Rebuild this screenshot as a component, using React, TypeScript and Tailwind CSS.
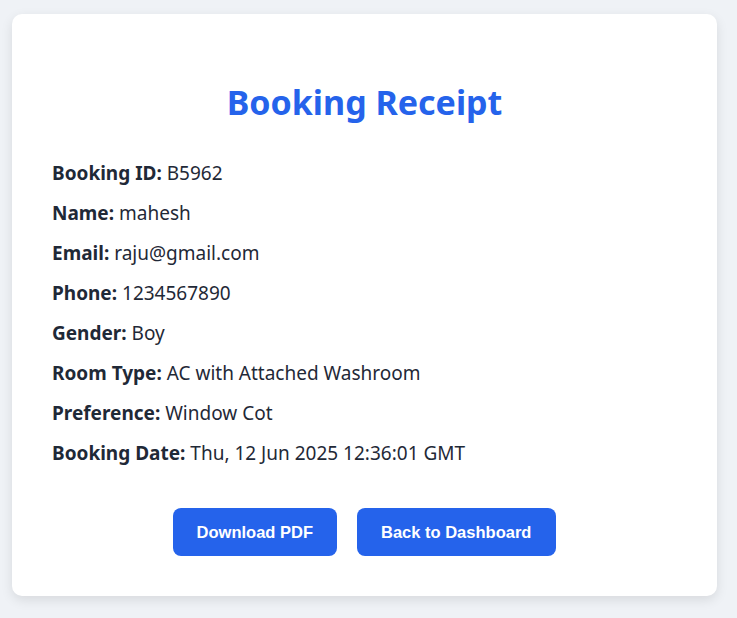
import React from 'react';

const rows: [string, string][] = [
  ['Booking ID:', 'B5962'],
  ['Name:', 'mahesh'],
  ['Email:', 'raju@gmail.com'],
  ['Phone:', '1234567890'],
  ['Gender:', 'Boy'],
  ['Room Type:', 'AC with Attached Washroom'],
  ['Preference:', 'Window Cot'],
  ['Booking Date:', 'Thu, 12 Jun 2025 12:36:01 GMT'],
];

const App = () => {
  return (
    <div className="min-h-[618px] bg-[#eff2f6] pt-[14px] pl-[12px]" style={{ fontFamily: '"Noto Sans", sans-serif' }}>
      <div className="w-[705px] bg-white rounded-[10px] shadow-[0_4px_12px_rgba(0,0,0,0.1)] px-10 pt-[68px] pb-10">
        <h1 className="text-center text-[34px] leading-[40px] font-bold text-[#2563eb] mb-[37px]">Booking Receipt</h1>
        <div className="text-[19px] leading-7 text-[#1f2937]">
          {rows.map(([label, value]) => (
            <p key={label} className="mb-3">
              <strong className="font-bold">{label}</strong> {value}
            </p>
          ))}
        </div>
        <div className="flex justify-center gap-5 mt-[41px]" style={{ fontFamily: '"Liberation Sans", Arial, sans-serif' }}>
          <button className="bg-[#2563eb] text-white font-bold text-[16.5px] leading-6 px-6 py-3 rounded-lg">Download PDF</button>
          <button className="bg-[#2563eb] text-white font-bold text-[16.5px] leading-6 pl-6 pr-[25px] py-3 rounded-lg">Back to Dashboard</button>
        </div>
      </div>
    </div>
  );
};

export default App;
